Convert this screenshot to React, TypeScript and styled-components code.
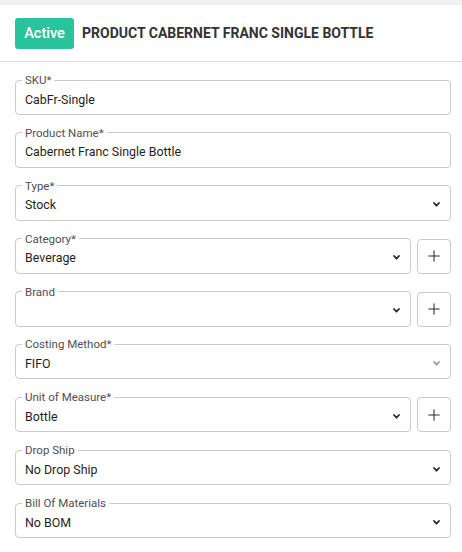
import styled, { createGlobalStyle } from "styled-components";
import { Plus } from "lucide-react";

const GlobalStyle = createGlobalStyle`
  html, body {
    margin: 0;
    padding: 0;
    background: #ffffff;
    font-family: Roboto, "Liberation Sans", sans-serif;
  }
  * { box-sizing: border-box; }
`;

const Page = styled.div`
  width: 462px;
  height: 552px;
  overflow: hidden;
  background: #ffffff;
  border-top: 5px solid #f1f1f3;
`;

const Header = styled.div`
  display: flex;
  align-items: center;
  gap: 8px;
  height: 57px;
  padding: 0 15px;
  border-bottom: 1px solid #e2e2e5;
`;

const Badge = styled.span`
  display: inline-flex;
  align-items: center;
  justify-content: center;
  width: 59px;
  height: 31px;
  border-radius: 3px;
  background: #2bc39e;
  color: #ffffff;
  font-size: 14.5px;
  font-weight: 500;
`;

const Title = styled.h1`
  margin: 0;
  font-size: 14px;
  font-weight: 700;
  color: #333336;
`;

const Form = styled.div`
  display: flex;
  flex-direction: column;
  gap: 10.9px;
  padding: 11px 11px 0 15px;
`;

const Row = styled.div`
  display: flex;
  align-items: flex-end;
  gap: 6px;
`;

const Field = styled.fieldset`
  flex: 1;
  min-width: 0;
  margin: 0;
  padding: 0 10px 4px 9px;
  border: 1px solid #c9c9cf;
  border-radius: 4px;
`;

const Legend = styled.legend`
  padding: 0 3px;
  margin-left: -3px;
  font-size: 11.5px;
  line-height: 14px;
  color: #4f4f54;
`;

const ValueRow = styled.div`
  display: flex;
  align-items: center;
  justify-content: space-between;
  height: 23px;
  padding-top: 1px;
  font-size: 12.4px;
  color: #1f1f22;
`;

const Value = styled.span`
  white-space: nowrap;
`;

const Chevron = styled.svg<{ $muted?: boolean }>`
  width: 7px;
  height: 5px;
  color: ${({ $muted }) => ($muted ? "#9a9aa0" : "#2a2a2e")};
`;

const AddButton = styled.button`
  display: flex;
  align-items: center;
  justify-content: center;
  width: 34px;
  height: 35px;
  padding: 0;
  flex-shrink: 0;
  background: #ffffff;
  border: 1px solid #c9c9cf;
  border-radius: 4px;
  color: #2a2a2e;
`;

type FieldDef = {
  label: string;
  value?: string;
  select?: boolean;
  add?: boolean;
  muted?: boolean;
};

const fields: FieldDef[] = [
  { label: "SKU*", value: "CabFr-Single" },
  { label: "Product Name*", value: "Cabernet Franc Single Bottle" },
  { label: "Type*", value: "Stock", select: true },
  { label: "Category*", value: "Beverage", select: true, add: true },
  { label: "Brand", value: "", select: true, add: true },
  { label: "Costing Method*", value: "FIFO", select: true, muted: true },
  { label: "Unit of Measure*", value: "Bottle", select: true, add: true },
  { label: "Drop Ship", value: "No Drop Ship", select: true },
  { label: "Bill Of Materials", value: "No BOM", select: true },
  { label: "Short Description", value: "" },
];

function ChevronDown({ muted }: { muted?: boolean }) {
  return (
    <Chevron $muted={muted} viewBox="0 0 7 5" fill="none">
      <path d="M1 1 L3.5 3.7 L6 1" stroke="currentColor" strokeWidth="1.8" strokeLinecap="round" strokeLinejoin="round" />
    </Chevron>
  );
}

export default function App() {
  return (
    <>
      <GlobalStyle />
      <Page>
        <Header>
          <Badge>Active</Badge>
          <Title>PRODUCT CABERNET FRANC SINGLE BOTTLE</Title>
        </Header>
        <Form>
          {fields.map((f) => (
            <Row key={f.label}>
              <Field>
                <Legend>{f.label}</Legend>
                <ValueRow>
                  <Value>{f.value}</Value>
                  {f.select && <ChevronDown muted={f.muted} />}
                </ValueRow>
              </Field>
              {f.add && (
                <AddButton type="button" aria-label={`Add ${f.label}`}>
                  <Plus size={18} strokeWidth={1.4} />
                </AddButton>
              )}
            </Row>
          ))}
        </Form>
      </Page>
    </>
  );
}
